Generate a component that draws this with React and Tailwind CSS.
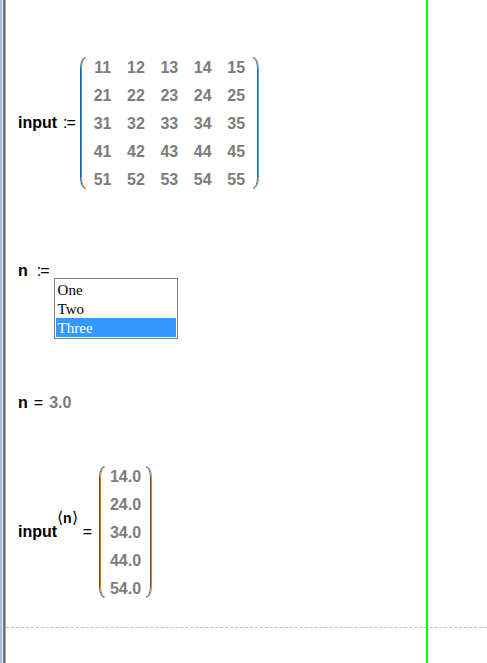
import React from 'react';

const matrix = [
  [11, 12, 13, 14, 15],
  [21, 22, 23, 24, 25],
  [31, 32, 33, 34, 35],
  [41, 42, 43, 44, 45],
  [51, 52, 53, 54, 55],
];

const column = ['14.0', '24.0', '34.0', '44.0', '54.0'];

const options = ['One', 'Two', 'Three'];

// matrix bracket, drawn as two 1px strokes to keep the blue/orange fringe
function Paren({ side }) {
  const left = side === 'left';
  const d = left
    ? 'M6 0.5 C3 2 1.5 6 1.5 13 L1.5 119 C1.5 126 3 130 6 131.5'
    : 'M0 0.5 C3 2 4.5 6 4.5 13 L4.5 119 C4.5 126 3 130 0 131.5';
  return (
    <svg width="7" height="132" viewBox="0 0 7 132" className="shrink-0">
      <path d={d} fill="none" stroke={left ? '#1a5fa8' : '#8a4a18'} strokeWidth="1" />
      <path d={d} fill="none" stroke={left ? '#c07a28' : '#4fa8e0'} strokeWidth="1" transform="translate(1 0)" />
    </svg>
  );
}

function Assign() {
  return <span className="text-[16px] font-normal tracking-[-1px] text-black">:=</span>;
}

export default function App() {
  return (
    <div className="relative flex h-[663px] w-[487px] overflow-hidden bg-white font-['Liberation_Sans',Arial,sans-serif]">
      {/* worksheet left edge */}
      <div className="flex h-full shrink-0">
        <div className="w-[2px] bg-[#a9c0dc]" />
        <div className="w-[1px] bg-[#d8e4f0]" />
        <div className="w-[1px] bg-[#8a8a8a]" />
        <div className="w-[1px] bg-[#5e5e5e]" />
        <div className="w-[1px] bg-[#b0b0b0]" />
      </div>

      <div className="flex flex-1 flex-col">
        {/* input := matrix */}
        <div className="mt-[53px] flex h-[140px] items-center pl-[12px]">
          <span className="text-[16px] font-bold leading-[20px] text-black">input</span>
          <span className="ml-[6px] mr-[4px] leading-[20px]">
            <Assign />
          </span>
          <div className="flex items-center">
            <Paren side="left" />
            <div className="grid grid-cols-5">
              {matrix.flat().map((v) => (
                <div
                  key={v}
                  className="flex h-[28px] w-[33.4px] items-center justify-center pt-[2px] text-[16px] font-bold text-[#7c7c7c]"
                >
                  {v}
                </div>
              ))}
            </div>
            <Paren side="right" />
          </div>
        </div>

        {/* n := list box */}
        <div className="mt-[68px] flex items-start pl-[12px]">
          <span className="text-[16px] font-bold leading-[20px] text-black">n</span>
          <span className="ml-[9px] leading-[20px]">
            <Assign />
          </span>
          <div className="ml-[5px] mt-[17px] w-[124px] border border-[#7f7f7f] p-[1px] font-['Liberation_Serif','Times_New_Roman',serif] text-[15px]">
            {options.map((o) => (
              <div
                key={o}
                className={
                  o === 'Three'
                    ? 'h-[19px] bg-[#3399ff] pl-[2px] pt-[1px] leading-[18px] text-white'
                    : 'h-[19px] pl-[2px] pt-[1px] leading-[18px] text-black'
                }
              >
                {o}
              </div>
            ))}
          </div>
        </div>

        {/* n = 3.0 */}
        <div className="mt-[54px] flex items-center pl-[12px] leading-[20px]">
          <span className="text-[16px] font-bold text-black">n</span>
          <span className="ml-[6px] text-[16px] text-black">=</span>
          <span className="ml-[6px] text-[16px] font-bold text-[#7c7c7c]">3.0</span>
        </div>

        {/* input<n> = column */}
        <div className="mt-[49px] flex h-[140px] items-center pl-[12px]">
          <span className="text-[16px] font-bold leading-[20px] text-black">input</span>
          <span className="flex items-center self-center pb-[28px] leading-none">
            <span className="font-['DejaVu_Sans',sans-serif] text-[16px] font-light text-black">⟨</span>
            <span className="text-[14px] font-bold text-black">n</span>
            <span className="font-['DejaVu_Sans',sans-serif] text-[16px] font-light text-black">⟩</span>
          </span>
          <span className="ml-[5px] mr-[6px] text-[16px] leading-[20px] text-black">=</span>
          <div className="flex items-center">
            <Paren side="left" />
            <div className="flex flex-col">
              {column.map((v) => (
                <div
                  key={v}
                  className="flex h-[28px] w-[41px] items-center justify-center pt-[2px] text-[16px] font-bold text-[#7c7c7c]"
                >
                  {v}
                </div>
              ))}
            </div>
            <Paren side="right" />
          </div>
        </div>

        {/* page break */}
        <div className="mt-[25px] border-t border-dashed border-[#c0c0c0]" />
      </div>

      {/* right margin marker */}
      <div className="absolute left-[426px] top-0 h-full w-[2px] bg-[#00ff00]" />
    </div>
  );
}
